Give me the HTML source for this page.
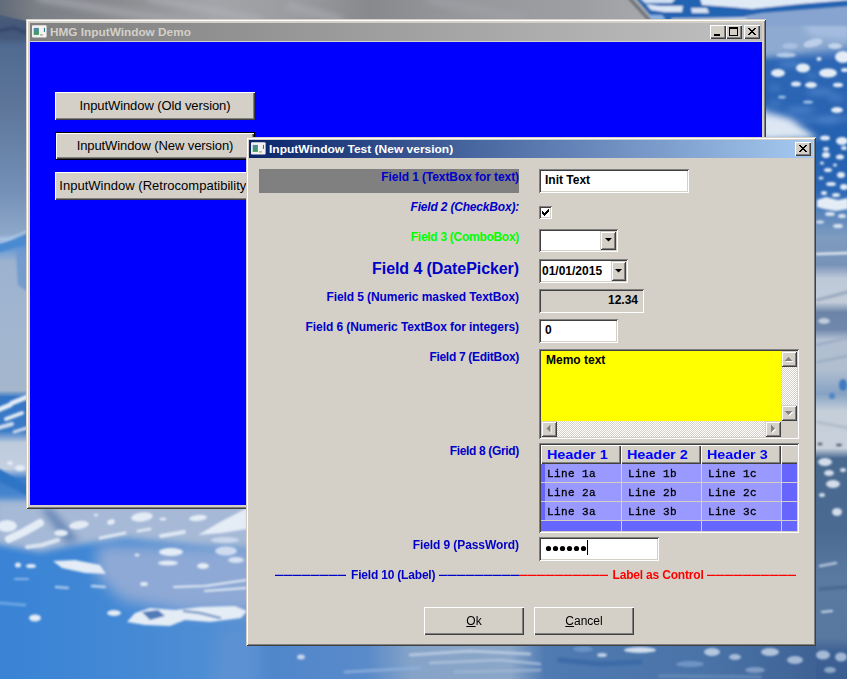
<!DOCTYPE html>
<html>
<head>
<meta charset="utf-8">
<title>HMG InputWindow Demo</title>
<style>
html,body{margin:0;padding:0;}
body{width:847px;height:679px;overflow:hidden;position:relative;background:#7f9fc4;font-family:"Liberation Sans",sans-serif;}
.abs{position:absolute;}
#bg{position:absolute;left:0;top:0;width:847px;height:679px;}
/* ---------- windows ---------- */
.win{position:absolute;background:#d4d0c8;box-sizing:border-box;}
#main{left:26px;top:19px;width:740px;height:490px;
 box-shadow:inset 1px 1px 0 #d4d0c8, inset -1px -1px 0 #404040, inset 2px 2px 0 #ffffff, inset -2px -2px 0 #808080;}
#main .title{position:absolute;left:4px;top:4px;width:732px;height:18px;background:linear-gradient(to right,#808080,#c0c0c0);}
#main .client{position:absolute;left:4px;top:23px;width:732px;height:463px;background:#0000ff;}
.ttext{position:absolute;left:20px;top:0;height:18px;line-height:18px;font-weight:bold;font-size:11px;white-space:nowrap;transform-origin:0 50%;}
#dlg{left:246px;top:137px;width:570px;height:509px;
 box-shadow:inset 1px 1px 0 #d4d0c8, inset -1px -1px 0 #404040, inset 2px 2px 0 #ffffff, inset -2px -2px 0 #808080;}
#dlg .title{position:absolute;left:3px;top:3px;width:564px;height:18px;background:linear-gradient(to right,#0a246a,#a6caf0);}
/* caption buttons */
.cbtn{position:absolute;top:2px;width:16px;height:14px;background:#d4d0c8;box-sizing:border-box;
 box-shadow:inset 1px 1px 0 #ffffff, inset -1px -1px 0 #404040, inset -2px -2px 0 #808080;}
/* push buttons */
.btn{position:absolute;box-sizing:border-box;background:#d4d0c8;text-align:center;color:#000;white-space:nowrap;overflow:hidden;
 box-shadow:inset 1px 1px 0 #ffffff, inset -1px -1px 0 #404040, inset -2px -2px 0 #808080;}
.btn.def{border:1px solid #000;box-shadow:inset 1px 1px 0 #ffffff, inset -1px -1px 0 #404040, inset -2px -2px 0 #808080;}
.b1{font-size:13px;letter-spacing:-0.09px;line-height:28px;height:28px;width:200px;left:25px;}
/* dialog content: coords relative to dialog */
.lbl{position:absolute;left:13px;width:260px;height:24px;text-align:right;font-weight:bold;font-size:12px;color:#0000c8;white-space:nowrap;line-height:14px;letter-spacing:-0.08px;padding-top:1px;box-sizing:border-box;}
.sunk{position:absolute;box-sizing:border-box;background:#fff;
 box-shadow:inset 1px 1px 0 #808080, inset -1px -1px 0 #ffffff, inset 2px 2px 0 #404040, inset -2px -2px 0 #d4d0c8;}
.txt{font-weight:bold;font-size:12px;color:#000;white-space:nowrap;}
.sbtn{position:absolute;box-sizing:border-box;background:#d4d0c8;
 box-shadow:inset 1px 1px 0 #d4d0c8, inset -1px -1px 0 #404040, inset 2px 2px 0 #ffffff, inset -2px -2px 0 #808080;}
.dither{background-color:#e9e7e3;background-image:
 linear-gradient(45deg,#d4d0c8 25%,transparent 25%,transparent 75%,#d4d0c8 75%),
 linear-gradient(45deg,#d4d0c8 25%,transparent 25%,transparent 75%,#d4d0c8 75%);
 background-size:2px 2px;background-position:0 0,1px 1px;background-color:#fff;}
.hdr{position:absolute;top:0;height:19px;box-sizing:border-box;background:#d4d0c8;color:#0000ff;font-weight:bold;font-size:13px;line-height:18px;white-space:nowrap;overflow:hidden;
 box-shadow:inset 1px 1px 0 #ffffff, inset -1px -1px 0 #404040, inset -2px -2px 0 #808080;}
.ht{position:absolute;left:6px;top:1px;transform:scaleX(1.105);transform-origin:0 50%;}
.dash{position:absolute;top:438px;height:1px;}
.db{background:repeating-linear-gradient(to right,#0000c8 0,#0000c8 8.3px,rgba(0,0,200,0.7) 8.3px,rgba(0,0,200,0.7) 9px);box-shadow:0 -1px 0 rgba(0,0,200,0.25)}
.dr{background:repeating-linear-gradient(to right,#ff0000 0,#ff0000 8.3px,rgba(255,0,0,0.7) 8.3px,rgba(255,0,0,0.7) 9px);box-shadow:0 -1px 0 rgba(255,0,0,0.25)}
.cell{position:absolute;height:18px;font-family:"Liberation Mono",monospace;font-size:11px;line-height:19px;color:#000;white-space:nowrap;background:#9999ff;letter-spacing:0.4px;-webkit-text-stroke:0.3px #000;}
</style>
</head>
<body>
<svg id="bg" width="847" height="679" viewBox="0 0 847 679">

 <defs>
  <filter id="bl1" x="-5%" y="-5%" width="110%" height="110%"><feGaussianBlur stdDeviation="1.2"/></filter>
  <filter id="bl3" x="-5%" y="-5%" width="110%" height="110%"><feGaussianBlur stdDeviation="3"/></filter>
  <filter id="bl7" x="-10%" y="-10%" width="120%" height="120%"><feGaussianBlur stdDeviation="7"/></filter>
  <linearGradient id="gtop" x1="0" y1="0" x2="1" y2="0">
   <stop offset="0" stop-color="#626c7a"/><stop offset="0.05" stop-color="#7a7e85"/><stop offset="0.18" stop-color="#8b8d91"/>
   <stop offset="0.32" stop-color="#a3a5a9"/><stop offset="0.44" stop-color="#9a9ca0"/><stop offset="0.55" stop-color="#87898d"/>
   <stop offset="0.70" stop-color="#98999d"/><stop offset="0.86" stop-color="#9c9ea2"/><stop offset="1" stop-color="#aaacae"/>
  </linearGradient>
  <linearGradient id="gleft" x1="0" y1="0" x2="0" y2="1">
   <stop offset="0" stop-color="#6c737c"/><stop offset="0.025" stop-color="#50607a"/><stop offset="0.044" stop-color="#3e5274"/>
   <stop offset="0.065" stop-color="#506a90"/><stop offset="0.15" stop-color="#5c7498"/><stop offset="0.28" stop-color="#7490b6"/>
   <stop offset="0.345" stop-color="#8ea8ca"/><stop offset="0.353" stop-color="#a8c4e4"/><stop offset="0.36" stop-color="#4f8cd2"/><stop offset="0.372" stop-color="#7aa2d4"/><stop offset="0.385" stop-color="#9cb2ce"/>
   <stop offset="0.50" stop-color="#a2b6d0"/><stop offset="0.575" stop-color="#a4b6cc"/><stop offset="0.585" stop-color="#3374c4"/><stop offset="0.635" stop-color="#3d7cc8"/>
   <stop offset="0.652" stop-color="#bccadc"/><stop offset="0.69" stop-color="#c4d0e0"/><stop offset="0.705" stop-color="#3a7cca"/><stop offset="0.735" stop-color="#4a88d0"/>
   <stop offset="0.75" stop-color="#7aa6dc"/><stop offset="0.765" stop-color="#a0b8d8"/><stop offset="0.80" stop-color="#8fb0da"/><stop offset="0.82" stop-color="#4a8cd6"/><stop offset="1" stop-color="#3c82d2"/>
  </linearGradient>
  <linearGradient id="gbl" x1="0" y1="0" x2="1" y2="0">
   <stop offset="0" stop-color="#3a83d5"/><stop offset="0.35" stop-color="#4087d5"/><stop offset="0.7" stop-color="#4b8cd4"/><stop offset="1" stop-color="#5691d3"/>
  </linearGradient>
  <linearGradient id="gbot" x1="0" y1="0" x2="1" y2="0">
   <stop offset="0" stop-color="#4c86cc"/><stop offset="0.22" stop-color="#5a8aca"/><stop offset="0.30" stop-color="#86a4c8"/>
   <stop offset="0.47" stop-color="#8aa6c8"/><stop offset="0.53" stop-color="#4f7ab2"/><stop offset="0.8" stop-color="#4a74a8"/><stop offset="1" stop-color="#3f6294"/>
  </linearGradient>
  <linearGradient id="gright" x1="0" y1="0" x2="0" y2="1">
   <stop offset="0" stop-color="#9ab4d8"/><stop offset="0.05" stop-color="#8aa6cc"/><stop offset="0.075" stop-color="#5a86c4"/><stop offset="0.09" stop-color="#2c66b4"/>
   <stop offset="0.17" stop-color="#2a64b2"/><stop offset="0.21" stop-color="#2260b0"/><stop offset="0.28" stop-color="#2a66b4"/>
   <stop offset="0.315" stop-color="#5a86bc"/><stop offset="0.35" stop-color="#7f9cc0"/><stop offset="0.39" stop-color="#7892b8"/><stop offset="0.41" stop-color="#bec9d8"/><stop offset="0.445" stop-color="#c2ccd9"/>
   <stop offset="0.46" stop-color="#6c84a8"/><stop offset="0.485" stop-color="#7088ac"/><stop offset="0.50" stop-color="#b2bfd2"/><stop offset="0.545" stop-color="#b0bed0"/>
   <stop offset="0.58" stop-color="#86a2c4"/><stop offset="0.605" stop-color="#c4ced8"/><stop offset="0.66" stop-color="#c8d0dc"/>
   <stop offset="0.675" stop-color="#48688e"/><stop offset="0.78" stop-color="#4a6a92"/>
   <stop offset="0.85" stop-color="#5a7aa2"/><stop offset="0.94" stop-color="#58789e"/><stop offset="0.96" stop-color="#3c6094"/><stop offset="1" stop-color="#3a5e90"/>
  </linearGradient>
 </defs>
<rect x="0" y="0" width="847" height="679" fill="#7f9fc4"/>
<rect x="0" y="0" width="34" height="679" fill="url(#gleft)"/>
<polygon points="0,0 670,0 670,26 26,26 26,21 0,15" fill="url(#gtop)"/>
<rect x="760" y="0" width="87" height="679" fill="url(#gright)"/>
<rect x="0" y="505" width="260" height="174" fill="url(#gbl)"/>
<rect x="240" y="640" width="576" height="39" fill="url(#gbot)"/>
<g filter="url(#bl7)"><polygon points="98,545 260,548 260,612 185,612 122,600 96,575" fill="#8ea9d5"/>
<polygon points="220,630 260,625 260,690 212,690" fill="#5c92d3"/></g>
<g filter="url(#bl3)"><polygon points="-5,500 255,500 255,548 200,545 125,538 70,546 40,552 -5,544" fill="#a6b9d6"/>
<polygon points="40,508 52,508 80,540 66,544" fill="#6f8ebc"/>
<polyline points="40,-2 120,12 200,24" fill="none" stroke="#a6a8ac" stroke-width="7" stroke-linecap="round" stroke-linejoin="round" opacity="0.8"/>
<polyline points="150,-2 260,20" fill="none" stroke="#b0b2b6" stroke-width="6" stroke-linecap="round" stroke-linejoin="round" opacity="0.7"/>
<polyline points="290,6 340,20" fill="none" stroke="#a8aaae" stroke-width="8" stroke-linecap="round" stroke-linejoin="round" opacity="0.7"/>
<polyline points="430,0 520,18" fill="none" stroke="#a2a2a6" stroke-width="8" stroke-linecap="round" stroke-linejoin="round" opacity="0.6"/>
<polygon points="-5,17 10,20 28,25 28,40 -5,40" fill="#44587a"/>
<polygon points="760,19 850,19 850,46 805,52 760,58" fill="#8eaad0"/>
<polygon points="800,19 850,19 850,40 810,36" fill="#a4bce0"/>
<polygon points="760,108 782,114 800,126 818,138 760,140" fill="#dde7f3"/>
<polyline points="766,112 800,120 850,118" fill="none" stroke="#4f86cc" stroke-width="4" stroke-linecap="round" stroke-linejoin="round" opacity="0.8"/>
<ellipse cx="790" cy="64" rx="12" ry="3" fill="#5e90d4" opacity="0.7"/>
<ellipse cx="820" cy="92" rx="14" ry="3" fill="#5e90d4" opacity="0.7"/>
<ellipse cx="800" cy="110" rx="15" ry="3" fill="#5e90d4" opacity="0.7"/>
<ellipse cx="836" cy="98" rx="8" ry="2.5" fill="#5e90d4" opacity="0.7"/>
<ellipse cx="775" cy="88" rx="6" ry="2" fill="#5e90d4" opacity="0.7"/>
<ellipse cx="828" cy="120" rx="12" ry="3" fill="#5e90d4" opacity="0.7"/>
<ellipse cx="812" cy="76" rx="5" ry="2" fill="#5e90d4" opacity="0.7"/>
<ellipse cx="775" cy="104" rx="7" ry="2" fill="#5e90d4" opacity="0.7"/></g>
<g filter="url(#bl1)"><polygon points="636,-2 850,-2 850,24 658,24" fill="#2363b2"/>
<polygon points="745,16 762,13 800,10 850,6 850,26 745,26" fill="#86a4cf"/>
<polyline points="629,-2 652,23" fill="none" stroke="#6a7078" stroke-width="3" stroke-linecap="round" stroke-linejoin="round"/>
<polygon points="646,4 660,6 683,6 682,12 664,12 651,10" fill="#dbe7f5"/>
<polygon points="691,8 707,8 709,13 692,13" fill="#d3e1f2"/>
<polygon points="700,-2 850,-2 850,0 800,4 752,9 730,7 702,5" fill="#e0eaf6"/>
<polygon points="640,-2 676,-2 672,3 645,3" fill="#cfdff2"/>
<polygon points="648,15 662,15 666,20 654,21" fill="#8ab0e0"/>
<polygon points="672,18 745,17 745,24 668,24" fill="#9cb8dc"/>
<polyline points="700,21 745,19" fill="none" stroke="#c8d8ec" stroke-width="3" stroke-linecap="round" stroke-linejoin="round" opacity="0.8"/>
<ellipse cx="778" cy="73" rx="7" ry="4" fill="#e4ecf6"/>
<ellipse cx="803" cy="68" rx="7" ry="4.5" fill="#e4ecf6"/>
<ellipse cx="828" cy="73" rx="9" ry="4.5" fill="#e4ecf6"/>
<ellipse cx="843" cy="57" rx="8" ry="6" fill="#e4ecf6"/>
<ellipse cx="796" cy="84" rx="5" ry="2.5" fill="#e4ecf6"/>
<ellipse cx="811" cy="85" rx="6" ry="3" fill="#e4ecf6"/>
<ellipse cx="838" cy="85" rx="5" ry="2.2" fill="#e4ecf6"/>
<ellipse cx="819" cy="59" rx="2.5" ry="2" fill="#e4ecf6"/>
<ellipse cx="845" cy="70" rx="4" ry="2" fill="#e4ecf6"/>
<ellipse cx="837" cy="110" rx="6" ry="3" fill="#e4ecf6"/>
<ellipse cx="786" cy="55" rx="10" ry="2.5" fill="#b4cae8"/>
<ellipse cx="782" cy="97" rx="4" ry="1.6" fill="#9ec0e8"/>
<ellipse cx="808" cy="102" rx="5" ry="1.6" fill="#a8c6ea"/>
<ellipse cx="813" cy="43" rx="10" ry="4" fill="#bccfe9" transform="rotate(-15 813 43)"/>
<ellipse cx="835" cy="46" rx="7" ry="3" fill="#c4d4ec"/>
<ellipse cx="790" cy="46" rx="8" ry="3" fill="#a8c0e2"/>
<ellipse cx="842" cy="141" rx="6" ry="4" fill="#e4ecf6"/>
<ellipse cx="825" cy="138" rx="5" ry="2.5" fill="#e4ecf6"/>
<ellipse cx="822" cy="205" rx="3" ry="2" fill="#dde6f2"/>
<ellipse cx="830" cy="214" rx="5" ry="2" fill="#dde6f2"/>
<ellipse cx="842" cy="216" rx="4" ry="2" fill="#dde6f2"/>
<ellipse cx="820" cy="222" rx="4" ry="1.5" fill="#dde6f2"/>
<ellipse cx="838" cy="226" rx="5" ry="2" fill="#dde6f2"/>
<ellipse cx="826" cy="149" rx="3" ry="2" fill="#dde6f2"/>
<ellipse cx="844" cy="148" rx="3" ry="2" fill="#dde6f2"/>
<polyline points="817,300 848,292" fill="none" stroke="#8c9cb8" stroke-width="3" stroke-linecap="round" stroke-linejoin="round" opacity="0.7"/>
<polyline points="817,345 848,338" fill="none" stroke="#90a2bc" stroke-width="2.5" stroke-linecap="round" stroke-linejoin="round" opacity="0.6"/>
<polyline points="817,362 848,356" fill="none" stroke="#8c9eb8" stroke-width="2" stroke-linecap="round" stroke-linejoin="round" opacity="0.6"/>
<polyline points="817,422 848,428" fill="none" stroke="#aab6c6" stroke-width="3" stroke-linecap="round" stroke-linejoin="round" opacity="0.7"/>
<ellipse cx="826" cy="155" rx="4" ry="3" fill="#e4ecf6"/>
<ellipse cx="840" cy="157" rx="4" ry="2.5" fill="#e4ecf6"/>
<ellipse cx="828" cy="170" rx="4" ry="2" fill="#e4ecf6"/>
<ellipse cx="841" cy="175" rx="4" ry="3" fill="#e4ecf6"/>
<ellipse cx="831" cy="184" rx="5" ry="2" fill="#e4ecf6"/>
<ellipse cx="844" cy="187" rx="4" ry="3" fill="#e4ecf6"/>
<ellipse cx="822" cy="163" rx="2" ry="1.5" fill="#e4ecf6"/>
<ellipse cx="835" cy="165" rx="2" ry="1.5" fill="#e4ecf6"/>
<ellipse cx="821" cy="178" rx="2.5" ry="1.5" fill="#e4ecf6"/>
<ellipse cx="836" cy="195" rx="4" ry="2" fill="#e4ecf6"/>
<ellipse cx="824" cy="193" rx="3" ry="2" fill="#e4ecf6"/>
<polygon points="817,200 826,197 838,200 848,198 848,209 836,211 824,209 817,207" fill="#e4ecf6"/>
<polyline points="817,254 848,253" fill="none" stroke="#e0e8f0" stroke-width="2.5" stroke-linecap="round" stroke-linejoin="round"/>
<ellipse cx="824" cy="321" rx="6" ry="3" fill="#c0ccdc"/>
<ellipse cx="820" cy="444" rx="2.5" ry="1.2" fill="#4a5868"/>
<ellipse cx="839" cy="445" rx="3" ry="1.2" fill="#4a5868"/>
<ellipse cx="825" cy="462" rx="7" ry="4" fill="#d4deea"/>
<ellipse cx="829" cy="473" rx="5" ry="3" fill="#d4deea"/>
<ellipse cx="833" cy="484" rx="7" ry="4" fill="#d4deea"/>
<ellipse cx="837" cy="512" rx="5" ry="4" fill="#d4deea"/>
<ellipse cx="822" cy="495" rx="3" ry="2" fill="#d4deea"/>
<ellipse cx="843" cy="470" rx="3" ry="2" fill="#d4deea"/>
<polyline points="820,566 836,563" fill="none" stroke="#b4c6dc" stroke-width="2.5" stroke-linecap="round" stroke-linejoin="round"/>
<polyline points="822,612 832,611" fill="none" stroke="#d0dcec" stroke-width="2" stroke-linecap="round" stroke-linejoin="round"/>
<polyline points="820,589 847,587" fill="none" stroke="#46648c" stroke-width="3" stroke-linecap="round" stroke-linejoin="round" opacity="0.8"/>
<ellipse cx="823" cy="655" rx="7" ry="4.5" fill="#a6bcd6"/>
<ellipse cx="841" cy="657" rx="6" ry="4.5" fill="#a0b8d4"/>
<ellipse cx="830" cy="670" rx="6" ry="3" fill="#8ea8c8"/>
<ellipse cx="843" cy="385" rx="4" ry="6" fill="#3f7ac0"/>
<ellipse cx="832" cy="396" rx="3" ry="3" fill="#4f84c4"/>
<ellipse cx="301" cy="657" rx="4" ry="2.5" fill="#c8d8ec"/>
<polyline points="345,672 420,668" fill="none" stroke="#8eb0dc" stroke-width="3" stroke-linecap="round" stroke-linejoin="round" opacity="0.8"/>
<polyline points="410,655 470,651 530,654" fill="none" stroke="#c0d0e4" stroke-width="3" stroke-linecap="round" stroke-linejoin="round" opacity="0.8"/>
<polyline points="430,663 500,660 540,664" fill="none" stroke="#b4c6de" stroke-width="2.5" stroke-linecap="round" stroke-linejoin="round" opacity="0.8"/>
<polyline points="455,672 540,670" fill="none" stroke="#a4b8d4" stroke-width="3" stroke-linecap="round" stroke-linejoin="round" opacity="0.7"/>
<ellipse cx="640" cy="650" rx="16" ry="3" fill="#d0deee"/>
<ellipse cx="602" cy="655" rx="5" ry="2" fill="#c0d2e8"/>
<polyline points="560,660 600,664 640,662" fill="none" stroke="#3a68a6" stroke-width="5" stroke-linecap="round" stroke-linejoin="round" opacity="0.8"/>
<ellipse cx="583" cy="649" rx="10" ry="3" fill="#6a94c8"/>
<ellipse cx="712" cy="652" rx="8" ry="4" fill="#b4c8e0"/>
<ellipse cx="735" cy="657" rx="6" ry="3" fill="#a8bedA"/>
<ellipse cx="690" cy="664" rx="14" ry="3" fill="#6f94c4"/>
<ellipse cx="770" cy="652" rx="9" ry="4" fill="#b0c4dc"/>
<ellipse cx="795" cy="660" rx="8" ry="4" fill="#a4bad6"/>
<ellipse cx="755" cy="670" rx="10" ry="3" fill="#7f9cc4"/>
<polyline points="660,676 760,677" fill="none" stroke="#6a8cb8" stroke-width="4" stroke-linecap="round" stroke-linejoin="round" opacity="0.7"/>
<ellipse cx="7" cy="526" rx="10" ry="6" fill="#e4ecf6"/>
<polyline points="9,539 24,532 40,523" fill="none" stroke="#e4ecf6" stroke-width="8" stroke-linecap="round" stroke-linejoin="round"/>
<ellipse cx="61" cy="533" rx="7" ry="3.2" fill="#e4ecf6"/>
<ellipse cx="79" cy="525" rx="10" ry="4" fill="#e4ecf6" transform="rotate(-8 79 525)"/>
<ellipse cx="111" cy="522" rx="4" ry="2.6" fill="#e4ecf6" transform="rotate(-20 111 522)"/>
<ellipse cx="96" cy="515" rx="2" ry="1.5" fill="#e4ecf6"/>
<polyline points="27,547 42,545 58,540" fill="none" stroke="#dbe5f2" stroke-width="4" stroke-linecap="round" stroke-linejoin="round"/>
<polyline points="100,538 125,533" fill="none" stroke="#dfe8f4" stroke-width="3" stroke-linecap="round" stroke-linejoin="round"/>
<polygon points="53,561 75,560 100,565 106,574 85,573 62,568" fill="#e4ecf6"/>
<ellipse cx="18" cy="565" rx="3" ry="2.5" fill="#e4ecf6"/>
<ellipse cx="31" cy="566" rx="5" ry="2" fill="#e4ecf6"/>
<polyline points="15,579 28,579" fill="none" stroke="#8ab6e8" stroke-width="2" stroke-linecap="round" stroke-linejoin="round"/>
<polyline points="56,587 68,588" fill="none" stroke="#a8c8ec" stroke-width="2.5" stroke-linecap="round" stroke-linejoin="round"/>
<polyline points="92,586 105,587" fill="none" stroke="#c0d6f0" stroke-width="2.5" stroke-linecap="round" stroke-linejoin="round"/>
<ellipse cx="35" cy="618" rx="6" ry="3.5" fill="#e4ecf6"/>
<ellipse cx="114" cy="613" rx="7" ry="3" fill="#e4ecf6"/>
<polyline points="0,603 25,605" fill="none" stroke="#6aa4e4" stroke-width="3" stroke-linecap="round" stroke-linejoin="round"/>
<ellipse cx="142" cy="517" rx="11" ry="4.5" fill="#e4ecf6" transform="rotate(-6 142 517)"/>
<ellipse cx="198" cy="518" rx="9" ry="3" fill="#e4ecf6" transform="rotate(-6 198 518)"/>
<ellipse cx="163" cy="519" rx="3.5" ry="1.5" fill="#e4ecf6"/>
<polygon points="198,535 220,522 247,508 247,529 222,533" fill="#e4ecf6"/>
<polyline points="138,531 150,529" fill="none" stroke="#dbe5f2" stroke-width="3" stroke-linecap="round" stroke-linejoin="round"/>
<polyline points="161,536 184,532" fill="none" stroke="#dfe8f4" stroke-width="4" stroke-linecap="round" stroke-linejoin="round"/>
<ellipse cx="171" cy="552" rx="12" ry="4" fill="#e4ecf6"/>
<ellipse cx="168" cy="563" rx="10" ry="2.6" fill="#e4ecf6"/>
<ellipse cx="203" cy="566" rx="6" ry="3" fill="#e4ecf6"/>
<ellipse cx="226" cy="551" rx="11" ry="4.5" fill="#cfdcf0"/>
<ellipse cx="236" cy="560" rx="8" ry="3" fill="#d8e2f2"/>
<ellipse cx="137" cy="555" rx="2.5" ry="1.5" fill="#e4ecf6"/>
<ellipse cx="144" cy="584" rx="4" ry="2" fill="#e4ecf6"/>
<polyline points="174,587 205,586 246,580" fill="none" stroke="#e4ecf6" stroke-width="2" stroke-linecap="round" stroke-linejoin="round"/>
<polyline points="205,591 246,588" fill="none" stroke="#e4ecf6" stroke-width="2" stroke-linecap="round" stroke-linejoin="round"/>
<polygon points="127,622 135,613 150,608 175,610 200,607 235,606 247,611 241,618 210,622 185,620 170,626 145,625" fill="#e4ecf6"/>
<polygon points="142,612 158,610 165,616 150,620" fill="#4f7cb8"/>
<polyline points="184,611 200,613 220,618" fill="none" stroke="#7c9cc8" stroke-width="2.5" stroke-linecap="round" stroke-linejoin="round"/>
<ellipse cx="225" cy="540" rx="14" ry="3" fill="#cad8ec"/>
<polyline points="-2,31 14,28 27,33" fill="none" stroke="#33456a" stroke-width="3" stroke-linecap="round" stroke-linejoin="round" opacity="0.9"/>
<polygon points="16,250 28,246 28,292 18,285" fill="#6a96ce" opacity="0.8"/>
<polygon points="-2,246 28,233 28,243 -2,253" fill="#4a8ad0"/>
<polyline points="-2,243 28,231" fill="none" stroke="#a8c4e4" stroke-width="2" stroke-linecap="round" stroke-linejoin="round"/>
<polyline points="-2,410 10,405" fill="none" stroke="#e4ecf6" stroke-width="5" stroke-linecap="round" stroke-linejoin="round"/>
<polyline points="12,403 27,397" fill="none" stroke="#e4ecf6" stroke-width="5" stroke-linecap="round" stroke-linejoin="round"/>
<polyline points="6,419 22,413" fill="none" stroke="#e4ecf6" stroke-width="4" stroke-linecap="round" stroke-linejoin="round"/>
<polyline points="-2,428 12,424" fill="none" stroke="#d0dcec" stroke-width="4" stroke-linecap="round" stroke-linejoin="round"/>
<polyline points="14,432 27,428" fill="none" stroke="#d0dcec" stroke-width="3" stroke-linecap="round" stroke-linejoin="round"/>
<ellipse cx="10" cy="463" rx="3" ry="2" fill="#e4ecf6"/>
<ellipse cx="20" cy="468" rx="5" ry="3" fill="#e4ecf6"/>
<polygon points="-2,468 28,486 28,496 -2,480" fill="#2f74c6"/></g>
</svg>

<!-- ================= main window ================= -->
<div class="win" id="main">
 <div class="title">
  <svg class="abs" style="left:1px;top:1px" width="16" height="16" viewBox="0 0 16 16">
   <defs><linearGradient id="ig" x1="0" y1="0" x2="0.3" y2="1"><stop offset="0" stop-color="#5a7fb8"/><stop offset="1" stop-color="#3aa05a"/></linearGradient></defs>
   <rect x="1" y="1.2" width="14.6" height="12.4" rx="1" fill="#f4f2f0"/>
   <rect x="2.7" y="3.9" width="5.2" height="7" fill="url(#ig)"/>
   <rect x="9" y="10.1" width="2.9" height="1.5" fill="#b4b4b4"/>
   <rect x="12.9" y="3.9" width="1.1" height="4" fill="#2f7a8a"/>
  </svg>
  <div class="ttext" style="color:#d4d0c8;left:19.5px;transform:scaleX(1.073)">HMG InputWindow Demo</div>
  <div class="cbtn" style="left:680px"><svg width="16" height="14"><rect x="4" y="9" width="6" height="2" fill="#000"/></svg></div>
  <div class="cbtn" style="left:696px"><svg width="16" height="14"><rect x="3.5" y="3.5" width="8" height="7" fill="none" stroke="#000"/><rect x="3" y="2" width="9" height="2" fill="#000"/></svg></div>
  <div class="cbtn" style="left:714px"><svg width="16" height="14"><path d="M4 3 L11 10 M5 3 L12 10 M11 3 L4 10 M12 3 L5 10" stroke="#000" stroke-width="1" fill="none"/></svg></div>
 </div>
 <div class="client">
  <div class="btn b1" style="top:50px">InputWindow (Old version)</div>
  <div class="btn b1 def" style="top:90px;line-height:26px">InputWindow (New version)</div>
  <div class="btn b1" style="top:130px;letter-spacing:0.02px">InputWindow (Retrocompatibility)</div>
 </div>
</div>

<!-- ================= dialog ================= -->
<div class="win" id="dlg">
 <div class="title">
  <svg class="abs" style="left:1px;top:1px" width="16" height="16" viewBox="0 0 16 16">
   <rect x="1" y="1.2" width="14.6" height="12.4" rx="1" fill="#f4f2f0"/>
   <rect x="2.7" y="3.9" width="5.2" height="7" fill="url(#ig)"/>
   <rect x="9" y="10.1" width="2.9" height="1.5" fill="#b4b4b4"/>
   <rect x="12.9" y="3.9" width="1.1" height="4" fill="#2f7a8a"/>
  </svg>
  <div class="ttext" style="color:#ffffff;transform:scaleX(1.09)">InputWindow Test (New version)</div>
  <div class="cbtn" style="left:546px"><svg width="16" height="14"><path d="M4 3 L11 10 M5 3 L12 10 M11 3 L4 10 M12 3 L5 10" stroke="#000" stroke-width="1" fill="none"/></svg></div>
 </div>

 <!-- labels -->
 <div class="lbl" style="top:32px;background:#808080">Field 1 (TextBox for text)</div>
 <div class="lbl" style="top:62px;font-style:italic;letter-spacing:-0.19px">Field 2 (CheckBox):</div>
 <div class="lbl" style="top:92px;color:#00ff00;letter-spacing:-0.285px">Field 3 (ComboBox)</div>
 <div class="lbl" style="top:122px;font-size:16px;line-height:18px">Field 4 (DatePicker)</div>
 <div class="lbl" style="top:152px">Field 5 (Numeric masked TextBox)</div>
 <div class="lbl" style="top:182px">Field 6 (Numeric TextBox for integers)</div>
 <div class="lbl" style="top:212px;letter-spacing:-0.30px">Field 7 (EditBox)</div>
 <div class="lbl" style="top:306px;letter-spacing:-0.34px">Field 8 (Grid)</div>
 <div class="lbl" style="top:400px">Field 9 (PassWord)</div>
 <div class="lbl" style="top:430px;text-align:left;left:105px;width:120px;letter-spacing:-0.19px">Field 10 (Label)</div>
 <div class="dash db" style="left:29px;width:71px"></div><div class="dash db" style="left:193px;width:80px"></div>
 <div class="dash dr" style="left:273px;width:89px"></div><div class="dash dr" style="left:461px;width:89px"></div>

 <!-- field 1 -->
 <div class="sunk txt" style="left:293px;top:32px;width:150px;height:24px;line-height:22px;padding-left:6px">Init Text</div>
 <!-- field 2 checkbox -->
 <div class="sunk" style="left:293px;top:69px;width:13px;height:13px"><svg width="13" height="13" style="display:block" shape-rendering="crispEdges" fill="#000"><rect x="3" y="5" width="1" height="3"/><rect x="4" y="6" width="1" height="3"/><rect x="5" y="7" width="1" height="3"/><rect x="6" y="6" width="1" height="3"/><rect x="7" y="5" width="1" height="3"/><rect x="8" y="4" width="1" height="3"/><rect x="9" y="3" width="1" height="3"/></svg></div>
 <!-- field 3 combo -->
 <div class="sunk" style="left:293px;top:92px;width:79px;height:23px"><div class="sbtn" style="left:61px;top:2px;width:16px;height:19px"><svg width="16" height="19"><path d="M5 7 H12 L8.5 10.5 Z" fill="#000"/></svg></div></div>
 <!-- field 4 datepicker -->
 <div class="sunk txt" style="left:293px;top:122px;width:89px;height:24px;line-height:25px;padding-left:3px">01/01/2015<div class="sbtn" style="left:72px;top:2px;width:15px;height:20px"><svg width="15" height="20"><path d="M4 8 H11 L7.5 11.5 Z" fill="#000"/></svg></div></div>
 <!-- field 5 masked -->
 <div class="sunk txt" style="left:293px;top:152px;width:105px;height:24px;line-height:22px;background:#d4d0c8;text-align:right;padding-right:6px">12.34</div>
 <!-- field 6 numeric -->
 <div class="sunk txt" style="left:293px;top:182px;width:79px;height:24px;line-height:22px;padding-left:6px">0</div>
 <!-- field 7 editbox -->
 <div class="sunk" style="left:293px;top:212px;width:260px;height:90px;background:#ffff00">
  <div class="abs txt" style="left:7px;top:4px;line-height:14px">Memo text</div>
  <div class="abs dither" style="left:242px;top:2px;width:16px;height:70px"></div>
  <div class="sbtn" style="left:242px;top:2px;width:16px;height:16px"><svg width="16" height="16"><path d="M4.5 11 H12.5 L8.5 7 Z" fill="#fff"/><path d="M3.5 10 H11.5 L7.5 6 Z" fill="#808080"/></svg></div>
  <div class="sbtn" style="left:242px;top:56px;width:16px;height:16px"><svg width="16" height="16"><path d="M4.5 7 H12.5 L8.5 11 Z" fill="#fff"/><path d="M3.5 6 H11.5 L7.5 10 Z" fill="#808080"/></svg></div>
  <div class="abs dither" style="left:2px;top:72px;width:240px;height:16px"></div>
  <div class="abs" style="left:242px;top:72px;width:16px;height:16px;background:#d4d0c8"></div>
  <div class="sbtn" style="left:2px;top:72px;width:16px;height:16px"><svg width="16" height="16"><path d="M10.5 4.5 V12.5 L6.5 8.5 Z" fill="#fff"/><path d="M9.5 3.5 V11.5 L5.5 7.5 Z" fill="#808080"/></svg></div>
  <div class="sbtn" style="left:226px;top:72px;width:16px;height:16px"><svg width="16" height="16"><path d="M7 4.5 V12.5 L11 8.5 Z" fill="#fff"/><path d="M6 3.5 V11.5 L10 7.5 Z" fill="#808080"/></svg></div>
 </div>
 <!-- field 8 grid -->
 <div class="sunk" style="left:293px;top:306px;width:260px;height:90px;background:#6666ff">
  <div class="abs" style="left:2px;top:2px;width:256px;height:19px;background:#d4d0c8;overflow:hidden">
   <div class="hdr" style="left:0;width:80px"><span class="ht">Header 1</span></div>
   <div class="hdr" style="left:80px;width:80px"><span class="ht">Header 2</span></div>
   <div class="hdr" style="left:160px;width:80px"><span class="ht">Header 3</span></div>
   <div class="hdr" style="left:240px;width:20px"></div>
  </div>
  <div class="abs" style="left:6px;top:21px;width:236px;height:57px;background:#9999ff"></div>
  <div class="cell" style="left:8px;top:22px;background:none">Line 1a</div>
  <div class="cell" style="left:89px;top:22px;background:none">Line 1b</div>
  <div class="cell" style="left:169px;top:22px;background:none">Line 1c</div>
  <div class="cell" style="left:8px;top:41px;background:none">Line 2a</div>
  <div class="cell" style="left:89px;top:41px;background:none">Line 2b</div>
  <div class="cell" style="left:169px;top:41px;background:none">Line 2c</div>
  <div class="cell" style="left:8px;top:60px;background:none">Line 3a</div>
  <div class="cell" style="left:89px;top:60px;background:none">Line 3b</div>
  <div class="cell" style="left:169px;top:60px;background:none">Line 3c</div>
  <div class="abs" style="left:2px;top:39px;width:256px;height:1px;background:#d4d0c8"></div>
  <div class="abs" style="left:2px;top:58px;width:256px;height:1px;background:#d4d0c8"></div>
  <div class="abs" style="left:2px;top:77px;width:256px;height:1px;background:#d4d0c8"></div>
  <div class="abs" style="left:82px;top:21px;width:1px;height:67px;background:#d4d0c8"></div>
  <div class="abs" style="left:162px;top:21px;width:1px;height:67px;background:#d4d0c8"></div>
  <div class="abs" style="left:242px;top:21px;width:1px;height:67px;background:#d4d0c8"></div>
 </div>
 <!-- field 9 password -->
 <div class="sunk" style="left:293px;top:400px;width:120px;height:24px"><svg width="120" height="24"><circle cx="9.5" cy="11.5" r="2.6" fill="#000"/><circle cx="16.5" cy="11.5" r="2.6" fill="#000"/><circle cx="23.5" cy="11.5" r="2.6" fill="#000"/><circle cx="30.5" cy="11.5" r="2.6" fill="#000"/><circle cx="37.5" cy="11.5" r="2.6" fill="#000"/><circle cx="44.5" cy="11.5" r="2.6" fill="#000"/><rect x="48" y="3" width="1" height="15" fill="#000"/></svg></div>
 <!-- label as control -->
 <div class="abs" style="left:366.5px;top:431px;width:120px;height:24px;text-align:left;font-weight:bold;font-size:12px;color:#ff0000;line-height:14px;letter-spacing:-0.18px;white-space:nowrap">Label as Control</div>
 <!-- buttons -->
 <div class="btn" style="left:178px;top:470px;width:100px;height:28px;font-size:12px;line-height:28px"><u>O</u>k</div>
 <div class="btn" style="left:288px;top:470px;width:100px;height:28px;font-size:12px;line-height:28px"><u>C</u>ancel</div>
</div>
</body>
</html>
